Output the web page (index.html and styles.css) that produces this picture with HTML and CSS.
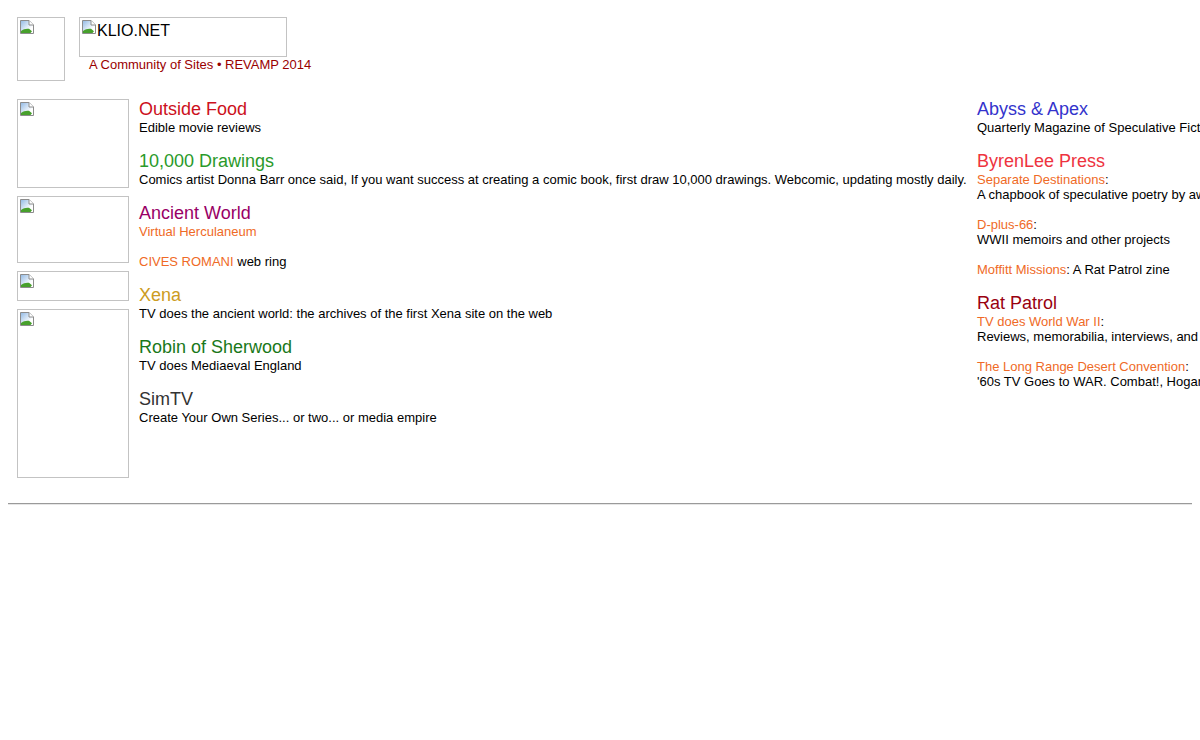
FILE: index.html
```html
<!DOCTYPE html>
<html lang="en">
<head>
<meta charset="utf-8">
<title>KLIO.NET</title>
<link rel="stylesheet" href="styles.css">
</head>
<body>
<header class="masthead">
  <div class="pic pic-logo-small">
    <svg class="broken" viewBox="0 0 16 16" width="16" height="16"><defs><linearGradient id="g1" x1="0" y1="0" x2="1" y2="1"><stop offset="0" stop-color="#8fb8e4"/><stop offset="0.7" stop-color="#ffffff"/></linearGradient></defs><path d="M1.5 1.5H10L14.5 6V14.5H1.5Z" fill="url(#g1)" stroke="#8c8c8c"/><path d="M2 14V12C4.5 10 7.5 9.3 10 9.8L13 12.2L11.5 14Z" fill="#47a02c"/><path d="M10 1.5V6H14.5" fill="#fff" stroke="#8c8c8c"/></svg>
  </div>
  <div class="brand">
    <div class="pic pic-logo">
      <svg class="broken" viewBox="0 0 16 16" width="16" height="16"><defs><linearGradient id="g2" x1="0" y1="0" x2="1" y2="1"><stop offset="0" stop-color="#8fb8e4"/><stop offset="0.7" stop-color="#ffffff"/></linearGradient></defs><path d="M1.5 1.5H10L14.5 6V14.5H1.5Z" fill="url(#g2)" stroke="#8c8c8c"/><path d="M2 14V12C4.5 10 7.5 9.3 10 9.8L13 12.2L11.5 14Z" fill="#47a02c"/><path d="M10 1.5V6H14.5" fill="#fff" stroke="#8c8c8c"/></svg><span class="alt">KLIO.NET</span>
    </div>
    <div class="tagline">A Community of Sites &bull; REVAMP 2014</div>
  </div>
</header>

<main class="sites">
  <div class="pics">
    <div class="pic pic-a"><svg class="broken" viewBox="0 0 16 16" width="16" height="16"><defs><linearGradient id="g3" x1="0" y1="0" x2="1" y2="1"><stop offset="0" stop-color="#8fb8e4"/><stop offset="0.7" stop-color="#ffffff"/></linearGradient></defs><path d="M1.5 1.5H10L14.5 6V14.5H1.5Z" fill="url(#g3)" stroke="#8c8c8c"/><path d="M2 14V12C4.5 10 7.5 9.3 10 9.8L13 12.2L11.5 14Z" fill="#47a02c"/><path d="M10 1.5V6H14.5" fill="#fff" stroke="#8c8c8c"/></svg></div>
    <div class="pic pic-b"><svg class="broken" viewBox="0 0 16 16" width="16" height="16"><defs><linearGradient id="g4" x1="0" y1="0" x2="1" y2="1"><stop offset="0" stop-color="#8fb8e4"/><stop offset="0.7" stop-color="#ffffff"/></linearGradient></defs><path d="M1.5 1.5H10L14.5 6V14.5H1.5Z" fill="url(#g4)" stroke="#8c8c8c"/><path d="M2 14V12C4.5 10 7.5 9.3 10 9.8L13 12.2L11.5 14Z" fill="#47a02c"/><path d="M10 1.5V6H14.5" fill="#fff" stroke="#8c8c8c"/></svg></div>
    <div class="pic pic-c"><svg class="broken" viewBox="0 0 16 16" width="16" height="16"><defs><linearGradient id="g5" x1="0" y1="0" x2="1" y2="1"><stop offset="0" stop-color="#8fb8e4"/><stop offset="0.7" stop-color="#ffffff"/></linearGradient></defs><path d="M1.5 1.5H10L14.5 6V14.5H1.5Z" fill="url(#g5)" stroke="#8c8c8c"/><path d="M2 14V12C4.5 10 7.5 9.3 10 9.8L13 12.2L11.5 14Z" fill="#47a02c"/><path d="M10 1.5V6H14.5" fill="#fff" stroke="#8c8c8c"/></svg></div>
    <div class="pic pic-d"><svg class="broken" viewBox="0 0 16 16" width="16" height="16"><defs><linearGradient id="g6" x1="0" y1="0" x2="1" y2="1"><stop offset="0" stop-color="#8fb8e4"/><stop offset="0.7" stop-color="#ffffff"/></linearGradient></defs><path d="M1.5 1.5H10L14.5 6V14.5H1.5Z" fill="url(#g6)" stroke="#8c8c8c"/><path d="M2 14V12C4.5 10 7.5 9.3 10 9.8L13 12.2L11.5 14Z" fill="#47a02c"/><path d="M10 1.5V6H14.5" fill="#fff" stroke="#8c8c8c"/></svg></div>
  </div>

  <div class="col col-mid">
    <section class="entry">
      <div class="title t-food">Outside Food</div>
      <div class="line">Edible movie reviews</div>
    </section>
    <section class="entry">
      <div class="title t-draw">10,000 Drawings</div>
      <div class="line">Comics artist Donna Barr once said, If you want success at creating a comic book, first draw 10,000 drawings. Webcomic, updating mostly daily.</div>
    </section>
    <section class="entry">
      <div class="title t-ancient">Ancient World</div>
      <div class="sub">
        <div class="line"><span class="link">Virtual Herculaneum</span></div>
      </div>
      <div class="sub">
        <div class="line"><span class="link">CIVES ROMANI</span> web ring</div>
      </div>
    </section>
    <section class="entry">
      <div class="title t-xena">Xena</div>
      <div class="line">TV does the ancient world: the archives of the first Xena site on the web</div>
    </section>
    <section class="entry">
      <div class="title t-robin">Robin of Sherwood</div>
      <div class="line">TV does Mediaeval England</div>
    </section>
    <section class="entry">
      <div class="title t-sim">SimTV</div>
      <div class="line">Create Your Own Series... or two... or media empire</div>
    </section>
  </div>

  <div class="col col-right">
    <section class="entry">
      <div class="title t-abyss">Abyss &amp; Apex</div>
      <div class="line">Quarterly Magazine of Speculative Fiction</div>
    </section>
    <section class="entry">
      <div class="title t-byren">ByrenLee Press</div>
      <div class="sub">
        <div class="line"><span class="link">Separate Destinations</span>:</div>
        <div class="line">A chapbook of speculative poetry by award-winning poets</div>
      </div>
      <div class="sub">
        <div class="line"><span class="link">D-plus-66</span>:</div>
        <div class="line">WWII memoirs and other projects</div>
      </div>
      <div class="sub">
        <div class="line"><span class="link">Moffitt Missions</span>: A Rat Patrol zine</div>
      </div>
    </section>
    <section class="entry">
      <div class="title t-rat">Rat Patrol</div>
      <div class="sub">
        <div class="line"><span class="link">TV does World War II</span>:</div>
        <div class="line">Reviews, memorabilia, interviews, and more</div>
      </div>
      <div class="sub">
        <div class="line"><span class="link">The Long Range Desert Convention</span>:</div>
        <div class="line">'60s TV Goes to WAR. Combat!, Hogan's Heroes and more</div>
      </div>
    </section>
  </div>
</main>

<hr class="rule">
</body>
</html>
```

FILE: styles.css
```css
body {
  margin: 8px 0 8px 8px;
  font-family: "Liberation Sans", Arial, sans-serif;
  color: #000;
  background: #fff;
}

.pic {
  box-sizing: border-box;
  border: 1px solid #c3c3c3;
  background: #fff;
  padding: 1px;
  overflow: hidden;
}

.broken {
  display: block;
  flex: none;
}

/* header */
.masthead {
  display: flex;
  align-items: flex-start;
  gap: 14px;
  padding: 9px 0 0 9px;
  height: 64px;
}

.pic-logo-small {
  width: 48px;
  height: 64px;
}

.brand {
  display: flex;
  flex-direction: column;
}

.pic-logo {
  width: 208px;
  height: 40px;
  display: flex;
  align-items: flex-start;
}

.alt {
  font-size: 16px;
  line-height: 18px;
  margin-top: 3px;
}

.tagline {
  padding-left: 10px;
  font-size: 13px;
  line-height: 15px;
  color: #990000;
}

/* main */
.sites {
  display: grid;
  grid-template-columns: 112px 828px 1fr;
  column-gap: 10px;
  align-items: start;
  margin-top: 18px;
  padding-left: 9px;
  overflow: hidden;
}

.pics {
  display: flex;
  flex-direction: column;
  gap: 8px;
}

.pic-a { height: 89px; }
.pic-b { height: 67px; }
.pic-c { height: 30px; }
.pic-d { height: 169px; }

.col {
  white-space: nowrap;
  min-width: 0;
}

.entry {
  margin-bottom: 16px;
}

.title {
  font-size: 18px;
  line-height: 21px;
}

.line {
  font-size: 13px;
  line-height: 15px;
}

.sub + .sub {
  margin-top: 15px;
}

.link {
  color: #ef6a26;
}

.t-food { color: #cc1020; }
.t-draw { color: #2a9a2a; }
.t-ancient { color: #990066; }
.t-xena { color: #cc9c22; }
.t-robin { color: #1a781a; }
.t-sim { color: #333333; }
.t-abyss { color: #3333cc; }
.t-byren { color: #ee3340; }
.t-rat { color: #990010; }

.rule {
  margin: 25px 8px 0 0;
  height: 0;
  border: 0;
  border-top: 1px solid #9a9a9a;
  border-bottom: 1px solid #e6e6e6;
}
```
